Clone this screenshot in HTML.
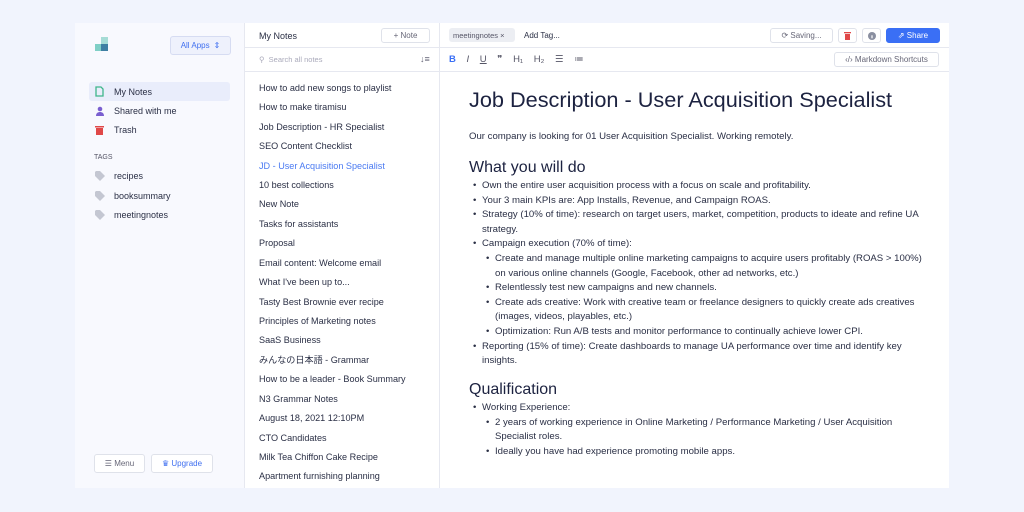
<!DOCTYPE html>
<html><head><style>
*{box-sizing:border-box;margin:0;padding:0}
body{width:1024px;height:512px;background:#f1f4fd;font-family:"Liberation Sans","Noto Sans CJK JP",sans-serif;color:#2a2f45;position:relative;overflow:hidden}
.app{position:absolute;left:75px;top:23px;width:874px;height:465px;background:#fff}
.side{position:absolute;left:0;top:0;width:170px;height:465px;background:#f8f9fe;border-right:1px solid #e6e8f0}
.list{position:absolute;left:170px;top:0;width:195px;height:465px;border-right:1px solid #e6e8f0;background:#fff}
.ed{position:absolute;left:365px;top:0;width:509px;height:465px}
.abs{position:absolute}
.btn{position:absolute;border:1px solid #dfe2ea;border-radius:3px;background:#fff;font-size:8px;color:#667;display:flex;align-items:center;justify-content:center;gap:4px}
.nav{position:absolute;left:14px;width:141px;height:19px;font-size:9px;display:flex;align-items:center;padding-left:6px;color:#2a2f45;border-radius:3px}
.nav .ic{width:19px;display:inline-flex;align-items:center}
.li{position:absolute;left:14px;font-size:9.1px;line-height:12px;height:12px;color:#2a2f45;white-space:nowrap}
.doc{position:absolute;left:29px;top:2px;width:470px;font-size:9.6px;color:#2a2f45;line-height:14.6px}
.doc ul{list-style:none}
.doc li{position:relative;padding-left:13px}
.doc li:before{content:"•";position:absolute;left:4px}
</style></head><body>
<div class="app">
 <div class="side">
  <div class="abs" style="left:20px;top:14px;width:14px;height:14px">
   <div class="abs" style="left:6px;top:0;width:7px;height:7px;background:#a6dcd6"></div>
   <div class="abs" style="left:0;top:7px;width:7px;height:7px;background:#7fcfc6"></div>
   <div class="abs" style="left:6px;top:7px;width:7px;height:7px;background:#3f7fa3"></div>
  </div>
  <div class="btn" style="left:95px;top:13px;width:61px;height:19px;background:#eef1fc;color:#3f6ff0;border-color:#d6dcf2">All Apps <span style="font-size:8px">⇕</span></div>
  <div class="nav" style="top:59px;background:#e9edfb"><span class="ic"><svg width="9" height="11" viewBox="0 0 9 11"><path d="M1 1h5l2 2v7H1z" fill="none" stroke="#3fb68b" stroke-width="1.3"/></svg></span>My Notes</div>
  <div class="nav" style="top:78px"><span class="ic"><svg width="10" height="10" viewBox="0 0 10 10"><circle cx="5" cy="3" r="2.3" fill="#7a5fd0"/><path d="M1 10c0-3 2-4 4-4s4 1 4 4z" fill="#7a5fd0"/></svg></span>Shared with me</div>
  <div class="nav" style="top:97px"><span class="ic"><svg width="9" height="10" viewBox="0 0 9 10"><rect x="0" y="1" width="9" height="1.5" fill="#e04848"/><rect x="1" y="3" width="7" height="7" fill="#e04848"/></svg></span>Trash</div>
  <div class="abs" style="left:19px;top:131px;font-size:7px;color:#556">TAGS</div>
  <div class="nav" style="top:143px"><span class="ic"><svg width="10" height="10" viewBox="0 0 10 10"><path d="M0 1v4l5 5 5-5-5-5H1z" fill="#c4c7d2"/></svg></span>recipes</div>
  <div class="nav" style="top:163px"><span class="ic"><svg width="10" height="10" viewBox="0 0 10 10"><path d="M0 1v4l5 5 5-5-5-5H1z" fill="#c4c7d2"/></svg></span>booksummary</div>
  <div class="nav" style="top:182px"><span class="ic"><svg width="10" height="10" viewBox="0 0 10 10"><path d="M0 1v4l5 5 5-5-5-5H1z" fill="#c4c7d2"/></svg></span>meetingnotes</div>
  <div class="btn" style="left:19px;top:431px;width:51px;height:19px">☰ Menu</div>
  <div class="btn" style="left:76px;top:431px;width:62px;height:19px;color:#3f6ff0">♛ Upgrade</div>
 </div>
 <div class="list">
  <div class="abs" style="left:14px;top:8px;font-size:9px">My Notes</div>
  <div class="btn" style="left:136px;top:5px;width:49px;height:15px">+ Note</div>
  <div class="abs" style="left:0;top:24px;width:194px;border-top:1px solid #e6e8f0"></div>
  <div class="abs" style="left:14px;top:32px;font-size:7.5px;color:#aab">⚲ &nbsp;Search all notes</div>
  <div class="abs" style="left:175px;top:31px;font-size:9px;color:#667">↓≡</div>
  <div class="abs" style="left:0;top:48px;width:194px;border-top:1px solid #e6e8f0"></div>
  <div class="li" style="top:59px">How to add new songs to playlist</div>
  <div class="li" style="top:78px">How to make tiramisu</div>
  <div class="li" style="top:98px">Job Description - HR Specialist</div>
  <div class="li" style="top:117px">SEO Content Checklist</div>
  <div class="li" style="top:137px;color:#4a7af2">JD - User Acquisition Specialist</div>
  <div class="li" style="top:156px">10 best collections</div>
  <div class="li" style="top:175px">New Note</div>
  <div class="li" style="top:195px">Tasks for assistants</div>
  <div class="li" style="top:214px">Proposal</div>
  <div class="li" style="top:234px">Email content: Welcome email</div>
  <div class="li" style="top:253px">What I've been up to...</div>
  <div class="li" style="top:273px">Tasty Best Brownie ever recipe</div>
  <div class="li" style="top:292px">Principles of Marketing notes</div>
  <div class="li" style="top:311px">SaaS Business</div>
  <div class="li" style="top:331px">みんなの日本語 - Grammar</div>
  <div class="li" style="top:350px">How to be a leader - Book Summary</div>
  <div class="li" style="top:370px">N3 Grammar Notes</div>
  <div class="li" style="top:389px">August 18, 2021 12:10PM</div>
  <div class="li" style="top:409px">CTO Candidates</div>
  <div class="li" style="top:428px">Milk Tea Chiffon Cake Recipe</div>
  <div class="li" style="top:447px">Apartment furnishing planning</div>
 </div>
 <div class="ed">
  <div class="abs" style="left:9px;top:5px;width:66px;height:14px;background:#eceef3;border-radius:3px;font-size:7.5px;color:#556;padding:3px 4px">meetingnotes ×</div>
  <div class="abs" style="left:84px;top:8px;font-size:8px">Add Tag...</div>
  <div class="btn" style="left:330px;top:5px;width:63px;height:15px">⟳ Saving...</div>
  <div class="btn" style="left:398px;top:5px;width:19px;height:15px"><svg width="7" height="8" viewBox="0 0 7 8"><rect x="0" y="0" width="7" height="1.3" fill="#e04848"/><rect x="1" y="2" width="5" height="6" fill="#e04848"/></svg></div>
  <div class="btn" style="left:422px;top:5px;width:19px;height:15px"><svg width="8" height="8"><circle cx="4" cy="4" r="4" fill="#8a8fa0"/><rect x="3.4" y="3.3" width="1.2" height="3" fill="#fff"/></svg></div>
  <div class="btn" style="left:446px;top:5px;width:54px;height:15px;background:#3a6ff5;border-color:#3a6ff5;color:#fff">⇗ Share</div>
  <div class="abs" style="left:0;top:24px;width:509px;border-top:1px solid #e6e8f0"></div>
  <div class="abs" style="left:9px;top:31px;font-size:9.5px;color:#556;word-spacing:8px;white-space:nowrap"><b style="color:#3a6ff5">B</b> <i>I</i> <u>U</u> ❞ H₁ H₂ ☰ ≔</div>
  <div class="btn" style="left:394px;top:29px;width:105px;height:15px">‹/› Markdown Shortcuts</div>
  <div class="abs" style="left:0;top:48px;width:509px;border-top:1px solid #e6e8f0"></div>
  <div class="doc">
   <div class="abs" style="left:0;top:68px;font-size:21.7px;color:#1c2240;white-space:nowrap">Job Description - User Acquisition Specialist</div>
   <div class="abs" style="left:0;top:105px;white-space:nowrap">Our company is looking for 01 User Acquisition Specialist. Working remotely.</div>
   <div class="abs" style="left:0;top:136px;font-size:16px;color:#1c2240">What you will do</div>
   <ul class="abs" style="left:0;top:154px;width:465px">
    <li>Own the entire user acquisition process with a focus on scale and profitability.</li>
    <li>Your 3 main KPIs are: App Installs, Revenue, and Campaign ROAS.</li>
    <li>Strategy (10% of time): research on target users, market, competition, products to ideate and refine UA strategy.</li>
    <li>Campaign execution (70% of time):
     <ul>
      <li>Create and manage multiple online marketing campaigns to acquire users profitably (ROAS &gt; 100%) on various online channels (Google, Facebook, other ad networks, etc.)</li>
      <li>Relentlessly test new campaigns and new channels.</li>
      <li>Create ads creative: Work with creative team or freelance designers to quickly create ads creatives (images, videos, playables, etc.)</li>
      <li>Optimization: Run A/B tests and monitor performance to continually achieve lower CPI.</li>
     </ul></li>
    <li>Reporting (15% of time): Create dashboards to manage UA performance over time and identify key insights.</li>
   </ul>
   <div class="abs" style="left:0;top:358px;font-size:16px;color:#1c2240">Qualification</div>
   <ul class="abs" style="left:0;top:376px;width:465px">
    <li>Working Experience:
     <ul>
      <li>2 years of working experience in Online Marketing / Performance Marketing / User Acquisition Specialist roles.</li>
      <li>Ideally you have had experience promoting mobile apps.</li>
     </ul></li>
   </ul>
  </div>
 </div>
</div>
</body></html>
